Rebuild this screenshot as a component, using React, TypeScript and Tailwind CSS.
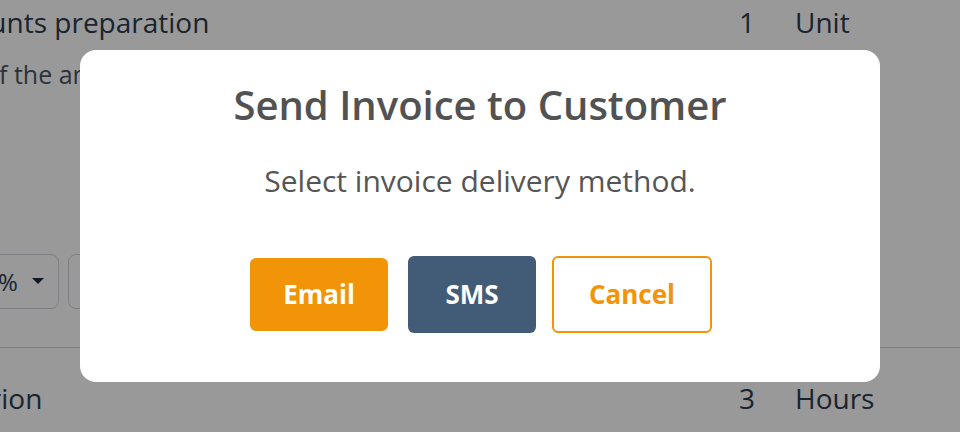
const font = { fontFamily: "'Open Sans', Lato, sans-serif" }

function LineRow({ desc, qty, unit }: { desc: string; qty: string; unit: string }) {
  return (
    <div className="flex items-center h-[44px] text-[28px] text-[#2d3b4e]">
      <div className="-ml-[72px] whitespace-nowrap">{desc}</div>
      <div className="flex-1" />
      <div className="w-10 text-right">{qty}</div>
      <div className="ml-[40px] w-[165px]">{unit}</div>
    </div>
  )
}

export default function App() {
  return (
    <div className="relative w-[960px] h-[432px] overflow-hidden bg-white" style={font}>
      {/* page behind the dialog */}
      <div className="flex flex-col">
        <LineRow desc="Accounts preparation" qty="1" unit="Unit" />
        <div className="mt-[15px] h-[32px] flex items-center text-[25px] text-[#4b5563] whitespace-nowrap">
          <span className="-ml-[16px]">of the annual accounts and tax return</span>
        </div>
        <div className="mt-[163px] flex gap-[9px] h-[55px]">
          <div className="-ml-[31px] w-[90px] rounded-lg border border-gray-300 flex items-center justify-between pl-[28px] pr-[14px] text-[24px] text-[#2d3b4e]">
            <span>%</span>
            <svg width="12" height="7" viewBox="0 0 12 7" className="text-[#1f2937]">
              <path d="M0 0 L12 0 L6 6 Z" fill="currentColor" />
            </svg>
          </div>
          <div className="w-[200px] rounded-lg border border-gray-300" />
        </div>
        <div className="mt-[38px] border-t border-gray-300" />
        <div className="mt-[28px]">
          <LineRow desc="Criterion" qty="3" unit="Hours" />
        </div>
      </div>

      {/* dialog */}
      <div className="absolute inset-0 bg-black/40 flex justify-center pt-[50px]">
        <div className="w-[800px] h-[332px] bg-white rounded-2xl flex flex-col items-center pt-[31px]">
          <h2 className="text-[40px] leading-[48px] font-semibold text-[#525252]">Send Invoice to Customer</h2>
          <p className="mt-[34px] text-[30px] leading-[36px] text-[#555555]">Select invoice delivery method.</p>
          <div className="mt-[57px] flex items-center gap-4">
            <button className="w-[142px] h-[77px] mr-[2px] rounded-lg border-2 border-white bg-[#f29408] text-white text-[26px] font-bold">
              Email
            </button>
            <button className="w-[128px] h-[77px] rounded-md bg-[#425b76] text-white text-[26px] font-bold">
              SMS
            </button>
            <button className="w-[160px] h-[77px] rounded-md border-2 border-[#f29408] bg-white text-[#f29408] text-[26px] font-bold">
              Cancel
            </button>
          </div>
        </div>
      </div>
    </div>
  )
}
